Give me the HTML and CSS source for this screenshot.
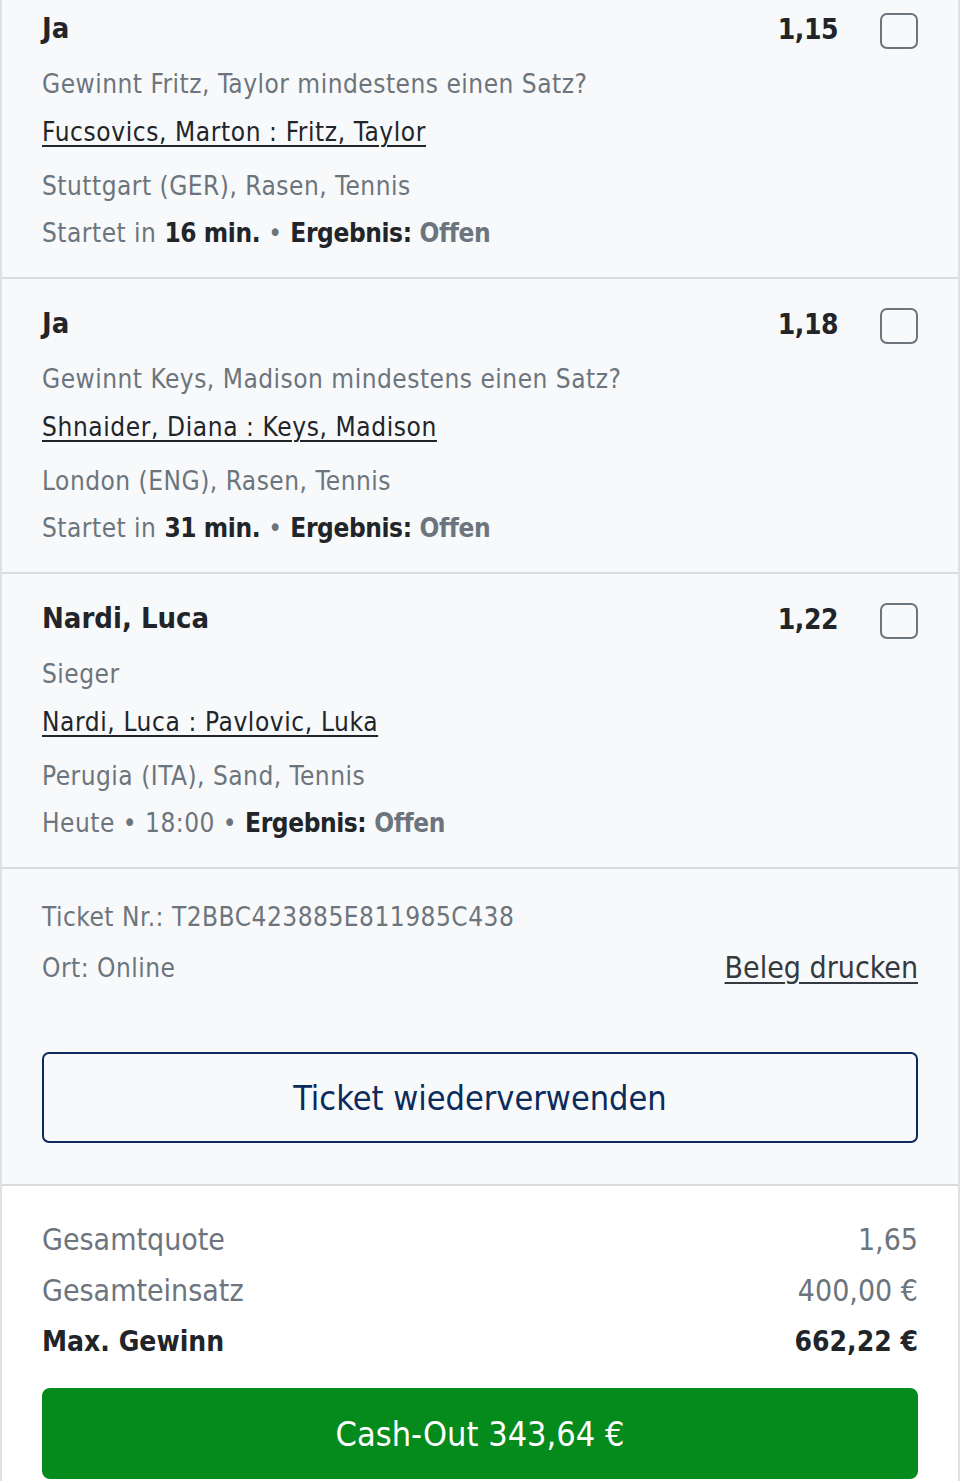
FILE: index.html
```html
<!DOCTYPE html>
<html lang="de">
<head>
<meta charset="utf-8">
<title>Wettschein</title>
<link rel="stylesheet" href="styles.css">
</head>
<body>
<div class="slip">
  <div class="list">
    <section class="card">
      <div class="head">
        <span class="pick">Ja</span>
        <span class="odds">1,15</span>
        <span class="check"></span>
      </div>
      <div class="market">Gewinnt Fritz, Taylor mindestens einen Satz?</div>
      <a class="match" href="#">Fucsovics, Marton : Fritz, Taylor</a>
      <div class="info loc">Stuttgart (GER), Rasen, Tennis</div>
      <div class="info time">Startet in <b>16 min.</b> • <b>Ergebnis:</b> <span class="res">Offen</span></div>
    </section>
    <section class="card">
      <div class="head">
        <span class="pick">Ja</span>
        <span class="odds">1,18</span>
        <span class="check"></span>
      </div>
      <div class="market">Gewinnt Keys, Madison mindestens einen Satz?</div>
      <a class="match" href="#">Shnaider, Diana : Keys, Madison</a>
      <div class="info loc">London (ENG), Rasen, Tennis</div>
      <div class="info time">Startet in <b>31 min.</b> • <b>Ergebnis:</b> <span class="res">Offen</span></div>
    </section>
    <section class="card">
      <div class="head">
        <span class="pick">Nardi, Luca</span>
        <span class="odds">1,22</span>
        <span class="check"></span>
      </div>
      <div class="market">Sieger</div>
      <a class="match" href="#">Nardi, Luca : Pavlovic, Luka</a>
      <div class="info loc">Perugia (ITA), Sand, Tennis</div>
      <div class="info time">Heute • 18:00 • <b>Ergebnis:</b> <span class="res">Offen</span></div>
    </section>
  </div>
  <section class="ticket">
    <div class="tline">Ticket Nr.: T2BBC423885E811985C438</div>
    <div class="orow">
      <span class="tline">Ort: Online</span>
      <a class="print" href="#">Beleg drucken</a>
    </div>
    <button class="reuse" type="button">Ticket wiederverwenden</button>
  </section>
  <section class="summary">
    <div class="srow"><span>Gesamtquote</span><span class="num">1,65</span></div>
    <div class="srow"><span>Gesamteinsatz</span><span class="num">400,00 €</span></div>
    <div class="srow strong"><span>Max. Gewinn</span><span class="num">662,22 €</span></div>
    <button class="cashout" type="button">Cash-Out 343,64 €</button>
  </section>
</div>
</body>
</html>
```
FILE: styles.css
```css
* { box-sizing: border-box; }
html, body { margin: 0; padding: 0; background: #ffffff; }
body {
  font-family: "DejaVu Sans Condensed", "Liberation Sans Narrow", Roboto, sans-serif;
  color: #212529;
  letter-spacing: 0.5px;
  overflow: hidden;
}
.slip {
  width: 960px;
  border-left: 2px solid #dfe2e5;
  border-right: 2px solid #dfe2e5;
}
.list { margin-top: -16px; }
.card {
  background: #f8f9fa;
  padding: 24px 40px 24px 40px;
  border-bottom: 2px solid #d9dcdf;
  display: flex;
  flex-direction: column;
  align-items: flex-start;
}
.head {
  display: flex;
  align-items: center;
  width: 100%;
  height: 40px;
}
.pick {
  flex: 1;
  font-size: 29px;
  font-weight: 700;
  letter-spacing: 0;
}
.odds {
  font-size: 28px;
  font-weight: 700;
  letter-spacing: -0.5px;
  margin-top: 2px;
}
.check {
  width: 38px;
  height: 36px;
  margin-left: 42px;
  margin-top: 6px;
  border: 2px solid #6c757d;
  border-radius: 7px;
}
.market, .info {
  font-size: 26px;
  line-height: 40px;
  color: #6c757d;
}
.market { margin-top: 16px; }
.match {
  margin-top: 8px;
  font-size: 26px;
  line-height: 40px;
  letter-spacing: 0.6px;
  color: #212529;
  text-decoration: underline;
  text-underline-offset: 4px;
  text-decoration-thickness: 2px;
}
.loc { margin-top: 14px; }
.time { margin-top: 7px; }
.time b { color: #212529; font-weight: 700; letter-spacing: -0.4px; }
.time .res { font-weight: 700; color: #6c757d; letter-spacing: -0.4px; }
.ticket {
  background: #f8f9fa;
  padding: 28px 40px 41px 40px;
  border-bottom: 2px solid #d9dcdf;
}
.tline {
  font-size: 26px;
  line-height: 40px;
  color: #6c757d;
}
.orow {
  margin-top: 11px;
  display: flex;
  justify-content: space-between;
  align-items: center;
}
.print {
  font-size: 30px;
  line-height: 40px;
  letter-spacing: 0;
  color: #343a40;
  text-decoration: underline;
  text-underline-offset: 4px;
  text-decoration-thickness: 2px;
}
.reuse {
  display: block;
  width: 100%;
  height: 91px;
  margin-top: 64px;
  background: transparent;
  border: 2px solid #0b2b5c;
  border-radius: 7px;
  color: #0b2b5c;
  font-family: inherit;
  font-size: 34px;
  letter-spacing: 0;
}
.summary {
  background: #ffffff;
  padding: 34px 40px 2px 40px;
}
.srow {
  display: flex;
  justify-content: space-between;
  font-size: 30px;
  line-height: 40px;
  letter-spacing: 0;
  color: #6c757d;
}
.srow + .srow { margin-top: 11px; }
.srow.strong { color: #212529; font-weight: 700; font-size: 28px; }
.cashout {
  display: block;
  width: 100%;
  height: 91px;
  margin-top: 26px;
  background: #058a1c;
  border: none;
  border-radius: 8px;
  color: #ffffff;
  font-family: inherit;
  font-size: 34px;
  letter-spacing: 0;
}
```
